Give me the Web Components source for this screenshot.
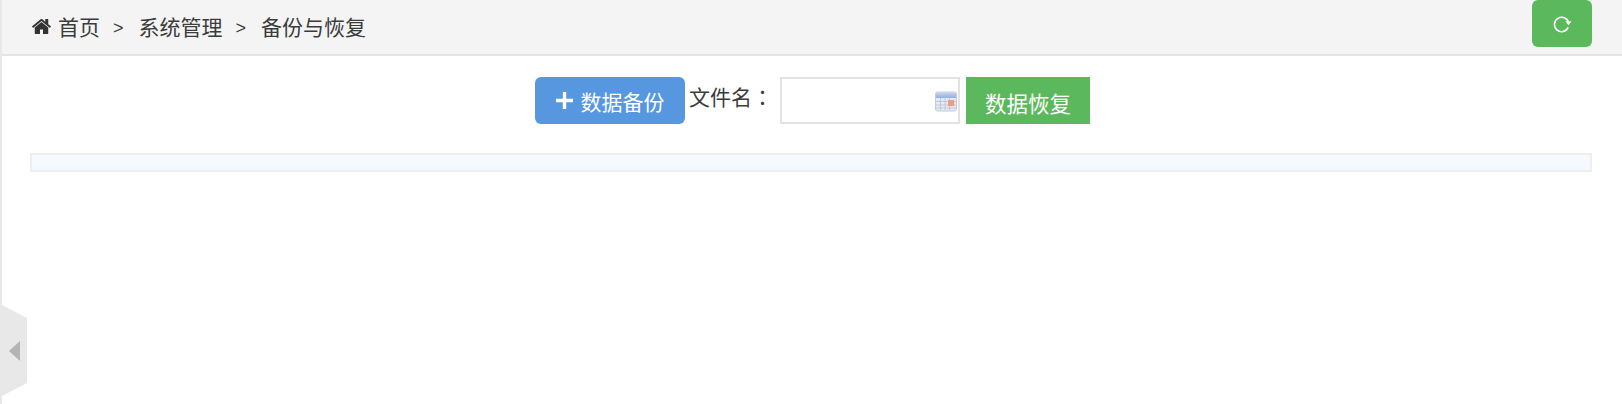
<!DOCTYPE html>
<html lang="zh">
<head>
<meta charset="utf-8">
<title>备份与恢复</title>
<style>
    html, body { margin: 0; height: 100%; background: #fff; }
    body { font-family: "Liberation Sans", "Noto Sans CJK SC", sans-serif; color: #333; overflow: hidden; }
</style>
</head>
<body>
<backup-page>
    <crumb-bar slot="header">
        <crumb-item icon>首页</crumb-item>
        <crumb-item>系统管理</crumb-item>
        <crumb-item>备份与恢复</crumb-item>
    </crumb-bar>
    <backup-toolbar slot="toolbar"></backup-toolbar>
    <empty-table slot="table"></empty-table>
</backup-page>
<side-handle></side-handle>

<script>
// Page frame: grey line on the left, header, then the padded content
class BackupPage extends HTMLElement {
    constructor() {
        super();
        this.attachShadow({ mode: 'open' });
        this.shadowRoot.innerHTML = `
            <style>
                :host {
                    display: flex;
                    flex-direction: column;
                    box-sizing: border-box;
                    height: 404px;
                    border-left: 2px solid #e8e8e8;
                }
                .content {
                    display: flex;
                    flex-direction: column;
                    gap: 29px;
                    padding: 21px 30px 0 28px;
                }
            </style>
            <slot name="header"></slot>
            <div class="content">
                <slot name="toolbar"></slot>
                <slot name="table"></slot>
            </div>
        `;
    }
}

class CrumbBar extends HTMLElement {
    constructor() {
        super();
        this.attachShadow({ mode: 'open' });
        this.shadowRoot.innerHTML = `
            <style>
                :host {
                    display: flex;
                    align-items: flex-start;
                    justify-content: space-between;
                    box-sizing: border-box;
                    height: 56px;
                    padding: 0 30px 0 29px;
                    background: #f4f4f4;
                    border-bottom: 2px solid #e4e4e4;
                }
                .trail {
                    display: flex;
                    align-items: center;
                    height: 52px;
                    font-size: 21px;
                    color: #3c3c3c;
                }
                .refresh {
                    display: flex;
                    align-items: center;
                    justify-content: center;
                    width: 60px;
                    height: 47px;
                    padding: 0;
                    border: 0;
                    border-radius: 6px;
                    background: #5cb85c;
                }
                ::slotted(crumb-item:not(:last-child))::after {
                    content: ">";
                    margin: 0 15px 0 13px;
                    padding-top: 4px;
                    font-size: 18px;
                }
            </style>
            <div class="trail"><slot></slot></div>
            <button class="refresh" aria-label="刷新">
                <svg width="20" height="20" viewBox="0 0 20 20" fill="none">
                    <path d="M16.6 8.600 A7.200 7.200 0 1 0 16.200 13.400" stroke="#fff" stroke-width="1.500"/>
                    <path d="M13.400 7.200 L19.400 7.200 L16.600 11.200 Z" fill="#fff"/>
                </svg>
            </button>
        `;
    }
}

class CrumbItem extends HTMLElement {
    constructor() {
        super();
        this.attachShadow({ mode: 'open' });
        const icon = this.hasAttribute('icon') ? `
            <svg width="21" height="21" viewBox="0 0 1792 1792" fill="#333">
                <path d="M1472 992v480q0 26-19 45t-45 19h-384v-384h-256v384h-384q-26 0-45-19t-19-45v-480q0-1 .5-3t.5-3l575-474 575 474q1 2 1 6zm223-69l-62 74q-8 9-21 11h-3q-13 0-21-7l-692-577-692 577q-12 8-24 7-13-2-21-11l-62-74q-8-10-7-23.500t11-21.500l719-599q32-26 76-26t76 26l244 204v-195q0-14 9-23t23-9h192q14 0 23 9t9 23v408l219 182q10 8 11 21.500t-7 23.500z"/>
            </svg>` : '';
        this.shadowRoot.innerHTML = `
            <style>
                :host { display: inline-flex; align-items: center; }
                svg { margin-right: 6px; }
            </style>
            ${icon}<slot></slot>
        `;
    }
}

class BackupToolbar extends HTMLElement {
    constructor() {
        super();
        this.attachShadow({ mode: 'open' });
        this.shadowRoot.innerHTML = `
            <style>
                :host {
                    display: flex;
                    justify-content: center;
                    align-items: flex-start;
                    padding-left: 3px;
                    font-size: 21px;
                    color: #3c3c3c;
                }
                button {
                    height: 47px;
                    padding: 0;
                    border: 0;
                    color: #fff;
                    font: inherit;
                    display: flex;
                    align-items: center;
                    justify-content: center;
                }
                .backup {
                    width: 150px;
                    gap: 8px;
                    background: #5697df;
                    border-radius: 6px;
                }
                .label {
                    margin: 5px 7px 0 4px;
                    line-height: 28px;
                }
                /* centred colon, as in the reference */
                .colon { font-family: "Noto Sans CJK TC", sans-serif; }
                .field {
                    position: relative;
                    box-sizing: border-box;
                    width: 180px;
                    height: 47px;
                    margin-right: 6px;
                    border: 2px solid #e2e2e2;
                    background: #fff;
                }
                .field input {
                    box-sizing: border-box;
                    width: 100%;
                    height: 100%;
                    padding: 0 36px 0 8px;
                    border: 0;
                    outline: 0;
                    background: transparent;
                    font: inherit;
                }
                .field svg {
                    position: absolute;
                    right: 1px;
                    top: 12px;
                }
                .restore {
                    width: 124px;
                    background: #5cb85c;
                    padding-top: 3px;
                    font-size: 21.5px;
                }
            </style>
            <button class="backup">
                <svg width="17" height="17" viewBox="0 0 17 17">
                    <path d="M6.800 0h3.400v6.800H17v3.400h-6.800V17H6.800v-6.800H0V6.800h6.800z" fill="#fff"/>
                </svg>
                <span>数据备份</span>
            </button>
            <span class="label">文件名<span class="colon" lang="zh-TW">：</span></span>
            <div class="field">
                <input type="text" aria-label="文件名">
                <svg width="22" height="21" viewBox="0 0 22 21">
                    <defs>
                        <linearGradient id="calTop" x1="0" y1="0" x2="0" y2="1">
                            <stop offset="0" stop-color="#c9d4e6"/>
                            <stop offset="1" stop-color="#8fb0e6"/>
                        </linearGradient>
                    </defs>
                    <rect x="0.500" y="1" width="21" height="19" rx="2" fill="#e6ebf3" stroke="#c4cad6"/>
                    <rect x="1" y="1.500" width="20" height="5.500" fill="url(#calTop)"/>
                    <path d="M1 10.500h20M1 14h20M1 17h20M5.500 7v12M10 7v12M14.500 7v12" stroke="#bcc8dc" stroke-width="1"/>
                    <rect x="13" y="9" width="6" height="6" fill="#eb9c8a"/>
                </svg>
            </div>
            <button class="restore">数据恢复</button>
        `;
    }
}

class EmptyTable extends HTMLElement {
    constructor() {
        super();
        this.attachShadow({ mode: 'open' });
        this.shadowRoot.innerHTML = `
            <style>
                :host {
                    display: block;
                    box-sizing: border-box;
                    height: 19px;
                    border: 2px solid #eeeeee;
                    background: #f4faff;
                }
            </style>
        `;
    }
}

// Collapse tab that sits over the page on the lower left edge
class SideHandle extends HTMLElement {
    constructor() {
        super();
        this.attachShadow({ mode: 'open' });
        this.shadowRoot.innerHTML = `
            <style>
                :host {
                    position: absolute;
                    left: 2px;
                    top: 305px;
                    width: 25px;
                    height: 91px;
                    display: block;
                }
                svg { display: block; }
            </style>
            <svg width="25" height="91" viewBox="0 0 25 91">
                <path d="M0 0 L25 13 V78 L0 91 Z" fill="#e8e8e8"/>
                <path d="M7 46 L18 36 V56 Z" fill="#b4b4b4"/>
            </svg>
        `;
    }
}

customElements.define('backup-page', BackupPage);
customElements.define('crumb-bar', CrumbBar);
customElements.define('crumb-item', CrumbItem);
customElements.define('backup-toolbar', BackupToolbar);
customElements.define('empty-table', EmptyTable);
customElements.define('side-handle', SideHandle);
</script>
</body>
</html>
